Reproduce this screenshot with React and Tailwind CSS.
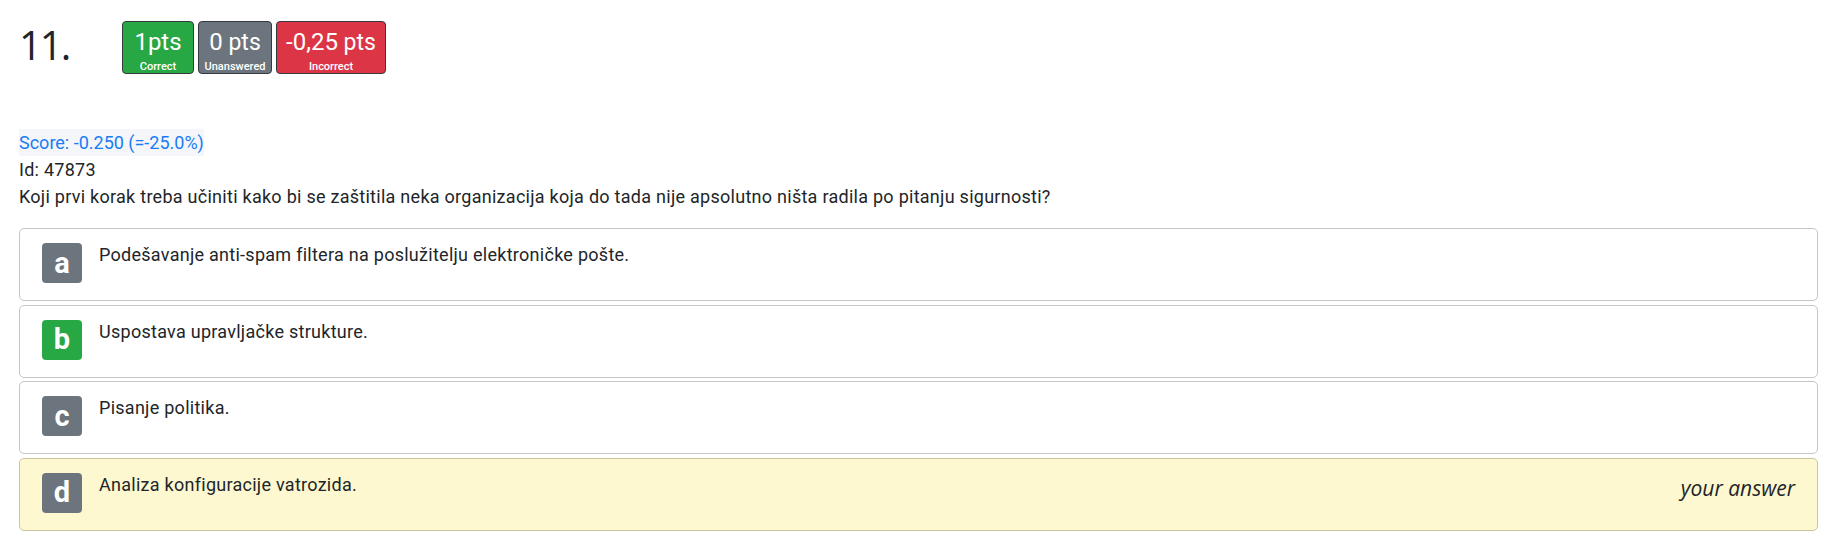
import React from 'react';

const OPTIONS = [
  { key: 'a', text: 'Podešavanje anti-spam filtera na poslužitelju elektroničke pošte.', tone: 'gray' },
  { key: 'b', text: 'Uspostava upravljačke strukture.', tone: 'green' },
  { key: 'c', text: 'Pisanje politika.', tone: 'gray' },
  { key: 'd', text: 'Analiza konfiguracije vatrozida.', tone: 'gray', yours: true },
];

function PtsBadge({ value, unit, label, className }) {
  return (
    <div className={`flex flex-col items-center justify-start h-[53px] rounded-[4px] border border-[#343a40] text-white ${className}`}>
      <div className="mt-[6px] leading-[28px] whitespace-nowrap">
        <span className="text-[24px]">{value}</span>
        <span className={unit.space ? 'text-[23px]' : 'text-[24px]'}>{unit.text}</span>
      </div>
      <div className="text-[11px] leading-[14px] mt-[1px] font-medium">{label}</div>
    </div>
  );
}

function Option({ opt }) {
  const box = opt.yours
    ? 'bg-[#fdf8d0] border-[#cbc59c]'
    : 'bg-white border-[#c6c6c6]';
  const letter = opt.tone === 'green' ? 'bg-[#28a745]' : 'bg-[#6c757d]';
  return (
    <div className={`flex items-start h-[73px] rounded-[5px] border pt-[12px] pl-[22px] pr-[22px] ${box}`}>
      <div className={`mt-[2px] w-10 h-10 shrink-0 rounded-[4px] flex items-center justify-center text-white text-[29px] font-bold leading-none ${letter}`}>
        {opt.key}
      </div>
      <div className="ml-[17px] text-[18px] leading-[27px] tracking-[0.015em] text-[#212529]">{opt.text}</div>
      {opt.yours && (
        <div className="ml-auto mt-[3px] italic text-[21px] leading-[28px] text-[#212529] font-['Open_Sans',sans-serif]">
          your answer
        </div>
      )}
    </div>
  );
}

export default function App() {
  return (
    <div className="min-h-screen bg-white font-['Roboto',sans-serif] text-[#212529] pl-[19px] pr-[24px] pt-[21px]">
      {/* header */}
      <div className="flex items-start">
        <h1 className="w-[103px] text-[40px] leading-[48px] font-normal tracking-[-2px] font-['Open_Sans',sans-serif]">11.</h1>
        <div className="flex gap-[4px]">
          <PtsBadge value="1" unit={{ text: 'pts', space: false }} label="Correct" className="w-[72px] bg-[#28a745]" />
          <PtsBadge value="0" unit={{ text: '\u00a0pts', space: true }} label="Unanswered" className="w-[74px] bg-[#6c757d]" />
          <PtsBadge value="-0,25" unit={{ text: '\u00a0pts', space: true }} label="Incorrect" className="w-[110px] bg-[#dc3545]" />
        </div>
      </div>

      {/* meta + question */}
      <div className="mt-[55px] text-[18px] leading-[27px] tracking-[0.015em]">
        <div className="inline-block bg-[#f4f6f9] text-[#1a7cf5] tracking-normal">Score: -0.250 (=-25.0%)</div>
        <div>Id: 47873</div>
        <div>Koji prvi korak treba učiniti kako bi se zaštitila neka organizacija koja do tada nije apsolutno ništa radila po pitanju sigurnosti?</div>
      </div>

      {/* options */}
      <div className="mt-[18px] flex flex-col gap-[3.5px]">
        {OPTIONS.map((opt) => (
          <Option key={opt.key} opt={opt} />
        ))}
      </div>
    </div>
  );
}
